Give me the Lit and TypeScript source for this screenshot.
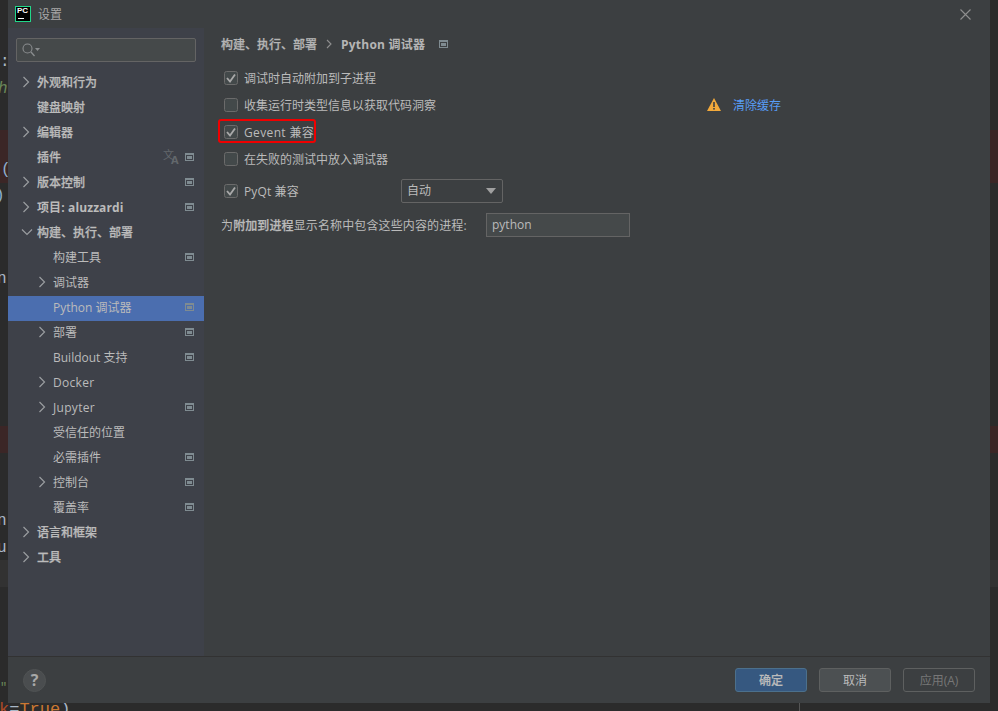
import { LitElement, html, css, svg } from "lit";
import { customElement } from "lit/decorators.js";

interface Row { label: string; depth: number; bold?: boolean; strong?: boolean; latin?: boolean; chevron?: "right" | "down"; pin?: boolean; translate?: boolean; selected?: boolean; }

const rows: Row[] = [
  { label: "外观和行为", depth: 0, bold: true, chevron: "right" },
  { label: "键盘映射", depth: 0, bold: true },
  { label: "编辑器", depth: 0, bold: true, chevron: "right" },
  { label: "插件", depth: 0, bold: true, pin: true, translate: true },
  { label: "版本控制", depth: 0, bold: true, chevron: "right", pin: true },
  { label: "项目: aluzzardi", depth: 0, bold: true, strong: true, chevron: "right", pin: true },
  { label: "构建、执行、部署", depth: 0, bold: true, chevron: "down" },
  { label: "构建工具", depth: 1, pin: true },
  { label: "调试器", depth: 1, chevron: "right" },
  { label: "Python 调试器", depth: 1, pin: true, selected: true },
  { label: "部署", depth: 1, chevron: "right", pin: true },
  { label: "Buildout 支持", depth: 1, pin: true },
  { label: "Docker", depth: 1, latin: true, chevron: "right" },
  { label: "Jupyter", depth: 1, latin: true, chevron: "right", pin: true },
  { label: "受信任的位置", depth: 1 },
  { label: "必需插件", depth: 1, pin: true },
  { label: "控制台", depth: 1, chevron: "right", pin: true },
  { label: "覆盖率", depth: 1, pin: true },
  { label: "语言和框架", depth: 0, bold: true, chevron: "right" },
  { label: "工具", depth: 0, bold: true, chevron: "right" },
];

const pinIcon = html`<svg class="pin" width="9" height="8" viewBox="0 0 9 8"><rect x="0.5" y="0.5" width="8" height="7" fill="none" stroke="#7f8b91"/><rect x="0" y="0" width="9" height="2" fill="#7f8b91"/><rect x="2" y="3" width="5" height="3" fill="#7f8b91"/></svg>`;
const chevRight = html`<svg class="chev" width="10" height="12" viewBox="0 0 10 12"><path d="M2.5 1 L7.5 6 L2.5 11" fill="none" stroke="#9a9da0" stroke-width="1.2"/></svg>`;
const chevDown = html`<svg class="chev" width="12" height="10" viewBox="0 0 12 10"><path d="M1 2.5 L6 7.5 L11 2.5" fill="none" stroke="#9a9da0" stroke-width="1.2"/></svg>`;
const checkMark = svg`<path d="M3 7 L6 10.5 L11 3.5" fill="none" stroke="#a9a9a9" stroke-width="1.8"/>`;

const box = (on: boolean) => html`<svg class="box" width="14" height="14" viewBox="0 0 14 14"><rect x="0.5" y="0.5" width="13" height="13" rx="2" fill="#43494a" stroke="#6b6b6b"/>${on ? checkMark : null}</svg>`;

@customElement("app-root")
export class AppRoot extends LitElement {
  static styles = css`
    :host { display: block; width: 998px; height: 711px; position: relative; overflow: hidden; background: #2b2b2b;
      font-family: "Open Sans", "Noto Sans CJK SC", sans-serif; font-size: 12px; color: #bbbbbb; }
    .band { position: absolute; left: 0; right: 0; }
    .band.red1 { top: 130px; height: 53px; background: #3b2626; }
    .band.red2 { top: 426px; height: 27px; background: #3b2626; }
    .band.light { top: 560px; height: 27px; background: #323232; }
    .frag { position: absolute; font-family: "Liberation Mono", monospace; font-size: 16px; line-height: 20px; color: #a9b7c6; }
    .frag.green { color: #6a8759; }
    .frag.paren { color: #8fb0d0; }
    .bottom-code { position: absolute; left: -1px; top: 700px; font-family: "Liberation Mono", monospace; font-size: 17px; line-height: 20px; color: #a9b7c6; white-space: pre; }
    .bottom-code b { font-weight: 400; color: #cc7832; }
    .bottom-code i { font-style: normal; color: #aa4926; }
    .vline { position: absolute; left: 799px; top: 703px; width: 1px; height: 8px; background: #555; }
    .dialog { position: absolute; left: 8px; top: 0; width: 982px; height: 703px; background: #3c3f41; display: flex; flex-direction: column; }
    .title { height: 28px; flex: none; display: flex; align-items: center; padding-left: 7px; gap: 7px; color: #a8a8a8; font-size: 12px; }
    .logo { width: 16px; height: 16px; box-sizing: border-box; background: #000; border: 1px solid #21d789; position: relative; display: block; }
    .logo span { position: absolute; left: 1px; top: -1px; font: 700 8px/10px "Liberation Sans", sans-serif; color: #fff; }
    .logo i { position: absolute; left: 2px; bottom: 2px; width: 6px; height: 1px; background: #fff; }
    .close { margin-left: auto; margin-right: 19px; display: block; }
    .body { flex: 1; display: flex; min-height: 0; }
    .side { width: 196px; flex: none; background: #3e4149; display: flex; flex-direction: column; }
    .search { margin: 10px 8px 9px 8px; height: 24px; box-sizing: border-box; border: 1px solid #646464; border-radius: 2px; background: #45494a; display: flex; align-items: center; padding-left: 5px; flex: none; }
    .row { height: 25px; flex: none; display: flex; align-items: center; position: relative; color: #bbbbbb; }
    .row.sel { background: #4b6eaf; }
    .row .lb { padding-bottom: 4px; }
    .row.latin .lb { padding-bottom: 2px; letter-spacing: 0.3px; }
    .row.bold .lb { font-weight: 500; -webkit-text-stroke: 0.25px #bbbbbb; }
    .row.strong .lb { font-weight: 700; -webkit-text-stroke: 0; letter-spacing: 0.01em; }
    .row .chevwrap { position: absolute; top: 0; bottom: 3px; display: flex; align-items: center; }
    .row.d0 { padding-left: 29px; }
    .row.d1 { padding-left: 45px; }
    .row.d0 .chevwrap { left: 13px; }
    .row.d1 .chevwrap { left: 29px; }
    .row .pin { position: absolute; left: 177px; top: 7px; }
    .tr { position: absolute; left: 155px; top: 3px; height: 16px; width: 16px; color: #63686c; }
    .tr span { position: absolute; }
    .tr .a { left: 0; top: 0; width: 8px; font-size: 11px; line-height: 11px; }
    .tr .b { left: 8px; top: 5px; font: 700 11px/11px "Open Sans", sans-serif; }
    .main { flex: 1; padding: 0 0 0 17px; display: flex; flex-direction: column; }
    .crumb { height: 18px; margin-top: 7px; margin-bottom: 11px; display: flex; align-items: center; color: #b5b5b5; }
    .crumb .c1 { font-weight: 500; -webkit-text-stroke: 0.25px #b5b5b5; }
    .crumb .c2 { font-weight: 700; letter-spacing: 0.02em; }
    .crumb svg.sep { margin: 0 9px 0 9px; }
    .crumb .pin { margin-left: 14px; }
    .en { letter-spacing: 0.03em; }
    .opt { height: 27px; display: flex; align-items: center; margin-left: 3px; gap: 6px; }
    .opt .box { flex: none; }
    .opt .w457 { width: 457px; flex: none; }
    .warn { flex: none; }
    .link { margin-left: 6px; color: #589df6; }
    .opt.pyqt { height: 24px; margin-top: 7px; }
    .opt.pyqt .lb { width: 151px; flex: none; letter-spacing: 0.01em; }
    .combo { width: 102px; height: 24px; box-sizing: border-box; border: 1px solid #646464; border-radius: 2px; background: #3c3f41; display: flex; align-items: center; justify-content: space-between; padding: 0 6px 2px 5px; }
    .combo svg { display: block; margin-top: 2px; }
    .procrow { height: 24px; margin-top: 10px; display: flex; align-items: center; }
    .procrow .l { width: 265px; flex: none; white-space: nowrap; letter-spacing: 0.01em; }
    .procrow b { font-weight: 500; -webkit-text-stroke: 0.25px #bbbbbb; }
    .input { width: 144px; height: 24px; box-sizing: border-box; border: 1px solid #646464; background: #45494a; display: flex; align-items: center; padding: 0 0 2px 5px; }
    .foot { height: 47px; flex: none; box-sizing: border-box; border-top: 1px solid #323232; display: flex; align-items: center; padding: 0 15px; gap: 12px; }
    .help { width: 23px; height: 23px; border-radius: 50%; background: #4a4d4f; margin-right: auto; color: #a8a8a8; display: flex; align-items: center; justify-content: center; font: 700 16px/1 "Open Sans", sans-serif; box-sizing: border-box; border: 1px solid #505354; }
    .btn { width: 72px; height: 24px; box-sizing: border-box; border-radius: 3px; display: flex; align-items: center; justify-content: center; border: 1px solid #5e6060; background: #4c5052; color: #bbb; }
    .btn.ok { background: #365880; border-color: #4c708c; font-weight: 500; -webkit-text-stroke: 0.2px #bbb; }
    .btn.dis { background: transparent; color: #777; }
    .redbox { position: absolute; left: 210px; top: 119px; width: 98px; height: 24px; box-sizing: border-box; border: 2.5px solid #f00000; border-radius: 3px; }
  `;

  render() {
    return html`
      <div class="band red1"></div><div class="band red2"></div><div class="band light"></div>
      <span class="frag" style="left:0;top:52px">:</span>
      <span class="frag green" style="left:-2px;top:79px;font-style:italic">h</span>
      <span class="frag paren" style="left:1px;top:160px">(</span>
      <span class="frag paren" style="left:-5px;top:186px">)</span>
      <span class="frag" style="left:-3px;top:269px">n</span>
      <span class="frag" style="left:-3px;top:511px">n</span>
      <span class="frag" style="left:-3px;top:538px">u</span>
      <span class="frag green" style="left:0;top:678px;font-size:12px">"</span>
      <span class="bottom-code"><i>k</i>=<b>True</b>)</span>
      <div class="vline"></div>

      <div class="dialog">
        <div class="title">
          <span class="logo"><span>PC</span><i></i></span>
          <span>设置</span>
          <svg class="close" width="11" height="11" viewBox="0 0 11 11"><path d="M0.5 0.5 L10.5 10.5 M10.5 0.5 L0.5 10.5" stroke="#8f8f8f" stroke-width="1.1" fill="none"/></svg>
        </div>
        <div class="body">
          <div class="side">
            <div class="search">
              <svg width="18" height="14" viewBox="0 0 18 14"><circle cx="5.5" cy="5.5" r="4.5" fill="none" stroke="#8a8d8f" stroke-width="1.1"/><path d="M9 9 L12.5 13" stroke="#8a8d8f" stroke-width="1.3"/><path d="M13 5 h5 l-2.5 3 z" fill="#8a8d8f"/></svg>
            </div>
            ${rows.map(r => html`
              <div class="row d${r.depth} ${r.bold ? "bold" : ""} ${r.strong ? "strong" : ""} ${r.latin ? "latin" : ""} ${r.selected ? "sel" : ""}">
                ${r.chevron ? html`<span class="chevwrap">${r.chevron === "right" ? chevRight : chevDown}</span>` : null}
                <span class="lb">${r.label}</span>
                ${r.translate ? html`<span class="tr"><span class="a">文</span><span class="b">A</span></span>` : null}
                ${r.pin ? pinIcon : null}
              </div>`)}
          </div>
          <div class="main">
            <div class="crumb">
              <span class="c1">构建、执行、部署</span>
              <svg class="sep" width="6" height="10" viewBox="0 0 6 10"><path d="M1 1 L5 5 L1 9" fill="none" stroke="#8f8f8f" stroke-width="1.1"/></svg>
              <span class="c2">Python 调试器</span>
              ${pinIcon}
            </div>
            <div class="opt">${box(true)}<span>调试时自动附加到子进程</span></div>
            <div class="opt">${box(false)}<span class="w457">收集运行时类型信息以获取代码洞察</span>
              <svg class="warn" width="14" height="13" viewBox="0 0 14 13"><path d="M7 0 L14 13 H0 Z" fill="#f2a93b"/><rect x="6.2" y="4" width="1.6" height="5" fill="#3c3f41"/><rect x="6.2" y="10" width="1.6" height="1.6" fill="#3c3f41"/></svg>
              <span class="link">清除缓存</span>
            </div>
            <div class="opt">${box(true)}<span class="en">Gevent 兼容</span></div>
            <div class="opt">${box(false)}<span>在失败的测试中放入调试器</span></div>
            <div class="opt pyqt">${box(true)}<span class="lb">PyQt 兼容</span>
              <div class="combo"><span>自动</span><svg width="10" height="6" viewBox="0 0 10 6"><path d="M0 0 H10 L5 6 Z" fill="#a0a0a0"/></svg></div>
            </div>
            <div class="procrow">
              <span class="l">为<b>附加到进程</b>显示名称中包含这些内容的进程:</span>
              <div class="input">python</div>
            </div>
          </div>
        </div>
        <div class="foot">
          <div class="help">?</div>
          <div class="btn ok">确定</div>
          <div class="btn">取消</div>
          <div class="btn dis">应用(A)</div>
        </div>
        <div class="redbox"></div>
      </div>
    `;
  }
}
